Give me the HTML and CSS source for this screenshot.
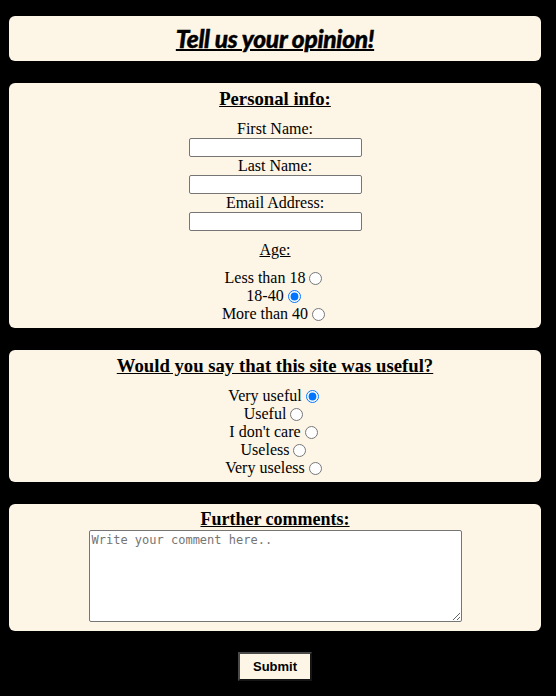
FILE: index.html
```html
<!DOCTYPE html>
<html>
<head>
<meta charset="utf-8">
<link rel="stylesheet" href="styles.css">
</head>
<body>
<div class="card title-card">
  <h1 class="title">Tell us your opinion!</h1>
</div>
<form class="form">
  <div class="card">
    <h3 class="heading">Personal info:</h3>
    <div class="field">
      <label class="label">First Name:</label>
      <input class="text" type="text">
    </div>
    <div class="field">
      <label class="label">Last Name:</label>
      <input class="text" type="text">
    </div>
    <div class="field">
      <label class="label">Email Address:</label>
      <input class="text" type="text">
    </div>
    <p class="sub">Age:</p>
    <div class="radio-row">Less than 18 <input class="radio" type="radio" name="age"></div>
    <div class="radio-row">18-40 <input class="radio" type="radio" name="age" checked></div>
    <div class="radio-row">More than 40 <input class="radio" type="radio" name="age"></div>
  </div>
  <div class="card">
    <h3 class="heading">Would you say that this site was useful?</h3>
    <div class="radio-row">Very useful <input class="radio" type="radio" name="u" checked></div>
    <div class="radio-row">Useful <input class="radio" type="radio" name="u"></div>
    <div class="radio-row">I don't care <input class="radio" type="radio" name="u"></div>
    <div class="radio-row">Useless <input class="radio" type="radio" name="u"></div>
    <div class="radio-row">Very useless <input class="radio" type="radio" name="u"></div>
  </div>
  <div class="card comments">
    <h3 class="heading tight">Further comments:</h3>
    <textarea class="area" placeholder="Write your comment here.."></textarea>
  </div>
  <div class="actions">
    <button class="submit" type="button">Submit</button>
  </div>
</form>
</body>
</html>
```
FILE: styles.css
```css
html { background: #000; }
body {
  margin: 16px 15px 0 9px;
  background: #000;
  font-family: "Liberation Serif", "Times New Roman", serif;
  font-size: 16px;
  color: #000;
}
.card {
  background: #fdf5e6;
  border-radius: 6px;
  text-align: center;
  padding: 5px 0 5px;
  margin-bottom: 22px;
}
.title-card {
  height: 45px;
  box-sizing: border-box;
  padding: 0;
  display: flex;
  align-items: center;
  justify-content: center;
}
.title {
  margin: 0;
  font-family: "Lato", "Inter", sans-serif;
  font-weight: 900;
  font-style: italic;
  font-size: 24.5px;
  line-height: 30px;
  text-decoration: underline;
  text-decoration-thickness: 2px;
  letter-spacing: -0.3px;
  -webkit-text-stroke: 0.4px #000;
}
.form { margin: 0; }
.heading {
  margin: 0 0 10px;
  font-size: 18.72px;
  font-weight: bold;
  text-decoration: underline;
  line-height: 22px;
}
.heading.tight {
  margin-bottom: 0;
  font-size: 18px;
}
.field {
  display: flex;
  flex-direction: column;
  align-items: center;
}
.label {
  line-height: 18px;
  height: 18px;
}
.text {
  box-sizing: border-box;
  width: 173px;
  height: 19px;
  margin: 0;
  border: 1px solid #767676;
  border-radius: 2px;
  background: #fff;
  padding: 1px 2px;
}
.sub {
  margin: 10px 0 10px;
  line-height: 18px;
  text-decoration: underline;
}
.radio-row {
  line-height: 18px;
  height: 18px;
}
.radio {
  width: 13px;
  height: 13px;
  margin: 3px 3px 0 0;
  vertical-align: top;
}
.comments { padding: 4px 0 9px; }
.area {
  display: block;
  margin: 0 auto;
  box-sizing: border-box;
  width: 373px;
  height: 92px;
  border: 1px solid #767676;
  border-radius: 2px;
  padding: 2px;
  font-family: "DejaVu Sans Mono", monospace;
  font-size: 12px;
  line-height: 14px;
  background: #fff;
  resize: both;
}
.area::placeholder { color: #757575; }
.actions {
  display: flex;
  justify-content: center;
  margin-top: -1px;
}
.submit {
  width: 74px;
  height: 29px;
  background: #fdf5e6;
  border-style: solid;
  border-width: 2px;
  border-color: #4a4a4a #151515 #151515 #4a4a4a;
  font-family: "Liberation Sans", Arial, sans-serif;
  font-weight: bold;
  font-size: 13px;
  color: #000;
  padding: 0;
}
```
